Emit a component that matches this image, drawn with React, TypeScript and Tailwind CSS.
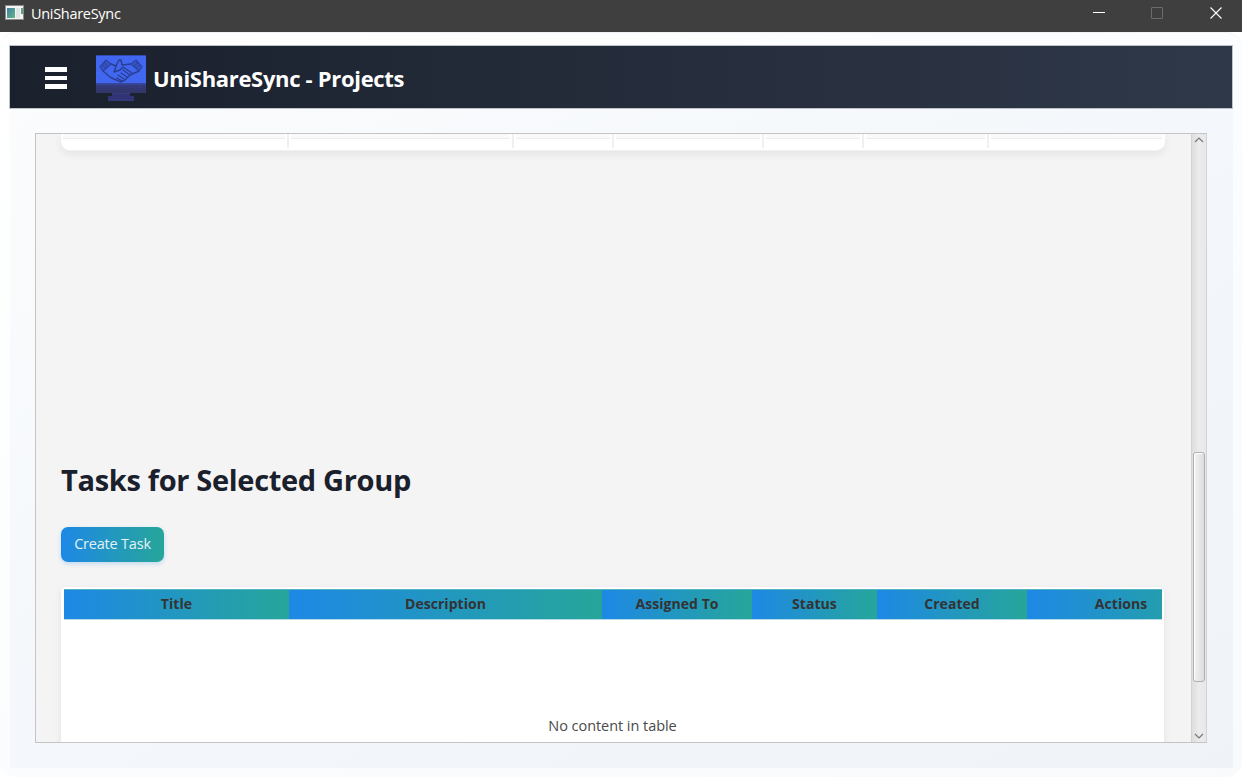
import React from "react";

const upperColumns = ["w-[228px]", "w-[225px]", "w-[100px]", "w-[150px]", "w-[100px]", "w-[125px]", "w-[175px]"];

const columns = [
  { label: "Title", width: "w-[225px]" },
  { label: "Description", width: "w-[313px]" },
  { label: "Assigned To", width: "w-[150px]" },
  { label: "Status", width: "w-[125px]" },
  { label: "Created", width: "w-[150px]" },
  { label: "Actions", width: "w-[188px]" },
];

function TitleBar() {
  return (
    <div className="flex h-8 shrink-0 items-start bg-[#3f3f3f] text-white">
      <svg className="ml-[5px] mt-[5px]" width="19" height="16" viewBox="0 0 19 16">
        <defs>
          <linearGradient id="appIcon" x1="0" y1="0" x2="1" y2="1">
            <stop offset="0" stopColor="#3f7fa5" />
            <stop offset="1" stopColor="#62b884" />
          </linearGradient>
        </defs>
        <rect x="0" y="0" width="19" height="15" fill="#8a8a8a" />
        <rect x="1" y="1" width="17" height="13" fill="#f4f4f4" />
        <rect x="2" y="3" width="8" height="10" fill="url(#appIcon)" />
        <rect x="11" y="3" width="4" height="10" fill="#e4e4e4" />
        <rect x="16" y="3" width="2" height="6" fill="#55a486" />
      </svg>
      <span className="ml-[7px] mt-[4px] text-[14.5px] leading-[20px] tracking-[-0.3px]">UniShareSync</span>
      <svg className="ml-auto" width="150" height="32" viewBox="0 0 150 32" fill="none">
        <path d="M1 12.5h12" stroke="#fff" />
        <rect x="59.5" y="7.5" width="11" height="11" rx="0.5" stroke="#6b6b6b" />
        <path d="M118.5 7.5l11 11m0-11l-11 11" stroke="#fff" strokeWidth="1.1" />
      </svg>
    </div>
  );
}

function Logo() {
  return (
    <svg className="ml-[29px] mt-[9px]" width="50" height="47" viewBox="0 0 50 47">
      <defs>
        <linearGradient id="base" x1="0" y1="0" x2="0" y2="1">
          <stop offset="0" stopColor="#3a49a8" />
          <stop offset="0.3" stopColor="#343a78" />
          <stop offset="1" stopColor="#323567" />
        </linearGradient>
      </defs>
      <rect width="50" height="30" fill="#4166f0" />
      <path d="M0 .5h50" stroke="#304bb0" />
      <rect y="28" width="50" height="10" fill="url(#base)" />
      <path d="M16 38h18v3h4v5H12v-5h4z" fill="#303474" />
      <path d="M17 38.5h17M13 45h24" stroke="#3b438e" opacity=".6" />
      <g fill="#3655c8" stroke="#2c449f" strokeWidth="1.2" strokeLinejoin="round">
        <path d="M10 5l-6 7 3 4 8-7z" />
        <path d="M40 5l6 7-3 4-8-7z" />
        <path d="M8 7l4 5M6 9l4 5M42 7l-4 5M44 9l-4 5" fill="none" />
      </g>
      <g fill="none" stroke="#2a3f94" strokeWidth="1.5" strokeLinejoin="round" strokeLinecap="round">
        <path d="M15 9l5 2 3-6 2 0 1 5 9-1" />
        <path d="M20 11l-2 6 6-2 3-3 9 6" />
        <path d="M7 16l7 6 4 2 7 3 4-2 5-5 9-4" />
        <path d="M27 15l7 5M25 18l6 4M22 20l6 4M21 23l5 3" strokeWidth="1.3" />
      </g>
      <path d="M34 32h2m2 0h2m2 0h3" stroke="#4a4589" opacity=".6" />
    </svg>
  );
}

function Header() {
  return (
    <header className="flex h-[64px] shrink-0 items-start border border-[#bfc2c7] bg-linear-to-r/srgb from-[#1a202c] to-[#2f3849]">
      <div className="ml-[35px] mt-[21px] flex w-[22px] flex-col gap-1">
        <span className="h-[5px] bg-white" />
        <span className="h-[4px] bg-white" />
        <span className="h-[5px] bg-white" />
      </div>
      <Logo />
      <h1 className="ml-[7px] mt-[15px] whitespace-nowrap text-[22px] font-bold leading-[34px] tracking-[-0.32px] text-white">
        UniShareSync - Projects
      </h1>
    </header>
  );
}

function Scrollbar() {
  return (
    <div className="-mr-px flex w-[16px] shrink-0 flex-col items-center border-x border-[#d2d2d2] bg-linear-to-r from-[#dedede] via-[#ebebeb] to-[#e8e8e8]">
      <svg className="mt-[3px] shrink-0" width="10" height="6" viewBox="0 0 10 6" fill="none">
        <path d="M1 5l4-4 4 4" stroke="#777" strokeWidth="1.2" />
      </svg>
      <div className="mt-[309px] h-[230px] w-[12px] shrink-0 rounded-[3px] border border-[#afafaf] bg-linear-to-r from-[#f2f2f2] to-[#dddddd] shadow-[inset_1px_1px_0_#fff]" />
      <svg className="mb-[3px] mt-auto shrink-0" width="10" height="6" viewBox="0 0 10 6" fill="none">
        <path d="M1 1l4 4 4-4" stroke="#777" strokeWidth="1.2" />
      </svg>
    </div>
  );
}

export default function App() {
  return (
    <div className="flex h-[777px] w-[1242px] flex-col overflow-hidden bg-white font-['Open_Sans','Noto_Sans',sans-serif]">
      <TitleBar />
      <div className="flex h-[745px] flex-col rounded-[16px] border-t border-[#f0f2f8] bg-linear-to-br/srgb from-white to-[#f8fafc] px-[9px] pb-[9px] pt-[12px]">
        <Header />
        <main className="ml-px flex grow bg-linear-to-br/srgb from-[#fafcfd] via-[#f4f7fb] to-[#eff3f8] pb-[25px] pl-[25px] pr-[26px] pt-[24px]">
          <div className="flex h-[610px] w-[1172px] border border-[#c4c4c4] bg-[#f4f4f4]">
            <div className="min-w-0 grow overflow-hidden pl-[25px]">
              <div className="flex h-[17px] w-[1104px] overflow-hidden rounded-b-[9px] border-b border-[#f1f2f4] bg-white pb-[2px] shadow-[0_3px_9px_rgba(0,0,0,0.07)]">
                {upperColumns.map((width, index) => (
                  <div
                    key={index}
                    className={`${width} shrink-0 ${index < 6 ? "border-r-2 border-[#f0f0f0]" : ""}`}
                  >
                    <div className="mx-[2px] h-[5px] border-b border-[#ededed] bg-[#fafafa]" />
                  </div>
                ))}
              </div>
              <h2 className="mt-[306px] whitespace-nowrap text-[29px] font-bold leading-[46px] tracking-[-0.32px] text-[#1a202c]">
                Tasks for Selected Group
              </h2>
              <button className="mt-[24px] flex h-[35px] w-[103px] items-center justify-center whitespace-nowrap rounded-[7px] bg-linear-to-r/srgb from-[#1e88e5] to-[#26a69a] pb-[1px] text-[14.5px] tracking-[-0.2px] text-[#e4f2f5] shadow-[0_2px_4px_rgba(30,136,229,0.23)]">
                Create Task
              </button>
              <section className="mt-[25px] h-[300px] w-[1103px] rounded-[5px] bg-white px-[3px] pt-[2px] shadow-[0_3px_9px_rgba(0,0,0,0.07)]">
                <div className="flex h-[31px] w-[1098px] overflow-hidden">
                  {columns.map(({ label, width }) => (
                    <div
                      key={label}
                      className={`${width} flex shrink-0 items-center justify-center whitespace-nowrap border-b border-t border-b-[#b4dce8] border-t-[#55b4c2] bg-linear-to-r/srgb from-[#1e88e5] to-[#26a69a] bg-clip-padding pb-[2px] text-[14px] font-bold tracking-[0.05px] text-[#333]`}
                    >
                      {label}
                    </div>
                  ))}
                </div>
                <div className="mt-[95px] text-center text-[14.5px] leading-[22px] tracking-[-0.05px] text-[#4a4a4a]">
                  No content in table
                </div>
              </section>
            </div>
            <Scrollbar />
          </div>
        </main>
      </div>
    </div>
  );
}
